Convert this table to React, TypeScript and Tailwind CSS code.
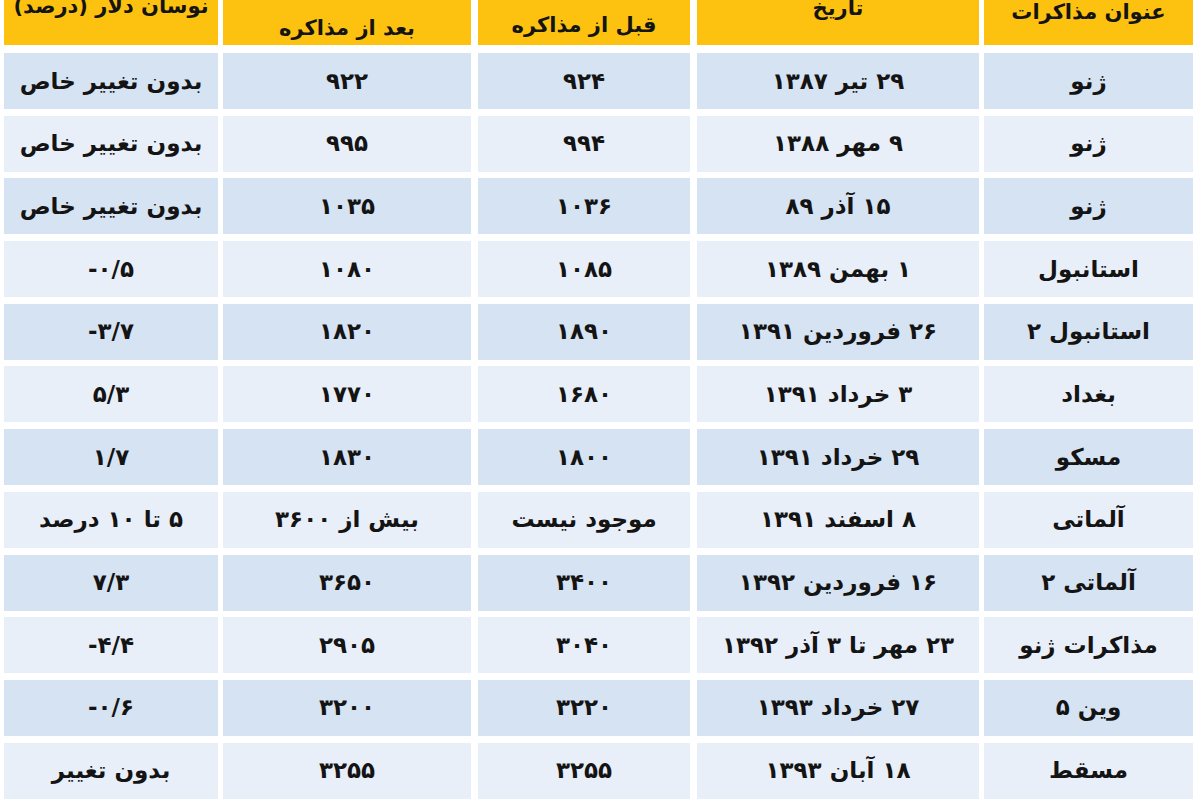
import React from "react";

const rows: string[][] = [
  ["ژنو", "۲۹ تیر ۱۳۸۷", "۹۲۴", "۹۲۲", "بدون تغییر خاص"],
  ["ژنو", "۹ مهر ۱۳۸۸", "۹۹۴", "۹۹۵", "بدون تغییر خاص"],
  ["ژنو", "۱۵ آذر ۸۹", "۱۰۳۶", "۱۰۳۵", "بدون تغییر خاص"],
  ["استانبول", "۱ بهمن ۱۳۸۹", "۱۰۸۵", "۱۰۸۰", "L-۰/۵"],
  ["استانبول ۲", "۲۶ فروردین ۱۳۹۱", "۱۸۹۰", "۱۸۲۰", "L-۳/۷"],
  ["بغداد", "۳ خرداد ۱۳۹۱", "۱۶۸۰", "۱۷۷۰", "۵/۳"],
  ["مسکو", "۲۹ خرداد ۱۳۹۱", "۱۸۰۰", "۱۸۳۰", "۱/۷"],
  ["آلماتی", "۸ اسفند ۱۳۹۱", "موجود نیست", "بیش از ۳۶۰۰", "۵ تا ۱۰ درصد"],
  ["آلماتی ۲", "۱۶ فروردین ۱۳۹۲", "۳۴۰۰", "۳۶۵۰", "۷/۳"],
  ["مذاکرات ژنو", "۲۳ مهر تا ۳ آذر ۱۳۹۲", "۳۰۴۰", "۲۹۰۵", "L-۴/۴"],
  ["وین ۵", "۲۷ خرداد ۱۳۹۳", "۳۲۲۰", "۳۲۰۰", "L-۰/۶"],
  ["مسقط", "۱۸ آبان ۱۳۹۳", "۳۲۵۵", "۳۲۵۵", "بدون تغییر"],
];

const widths = ["w-[209px]", "w-[282px]", "w-[212px]", "w-[248px]", "w-[214px]"];
const gaps = ["", "mr-[5px]", "mr-[7px]", "mr-[7px]", "mr-[5px]"];

const headers: { t: string; cls: string }[] = [
  { t: "عنوان مذاکرات", cls: "mt-[-20px]" },
  { t: "تاریخ", cls: "mt-[-28px]" },
  { t: "قبل از مذاکره", cls: "mt-[6px]" },
  { t: "بعد از مذاکره", cls: "mt-[12px]" },
  { t: "نوسان دلار (درصد)", cls: "mt-[-32px]" },
];

function Cell({ text }: { text: string }) {
  if (text.startsWith("L")) {
    return (
      <span dir="ltr" className="inline-block">
        {text.slice(1)}
      </span>
    );
  }
  return <span>{text}</span>;
}

export default function App() {
  return (
    <div
      dir="rtl"
      className="w-[1200px] h-[800px] overflow-hidden bg-white pr-[7px] pl-[4px] text-[#141414]"
      style={{ fontFamily: '"DejaVu Sans", sans-serif' }}
    >
      <div className="flex h-[45px]">
        {headers.map((h, i) => (
          <div
            key={i}
            className={`${widths[i]} ${gaps[i]} h-[45px] bg-[#fdc20f] flex justify-center items-center overflow-hidden`}
          >
            <span className={`${h.cls} text-[21px] font-bold leading-none whitespace-nowrap`}>{h.t}</span>
          </div>
        ))}
      </div>
      <div className="flex flex-col gap-y-[6.7px] mt-[8px]">
        {rows.map((r, ri) => (
          <div key={ri} className="flex h-[56px]">
            {r.map((c, ci) => (
              <div
                key={ci}
                className={`${widths[ci]} ${gaps[ci]} h-[56px] flex items-center justify-center ${
                  ri % 2 === 0 ? "bg-[#d6e3f3]" : "bg-[#e9eff9]"
                }`}
              >
                <span className="text-[23px] font-bold leading-none whitespace-nowrap">
                  <Cell text={c} />
                </span>
              </div>
            ))}
          </div>
        ))}
      </div>
    </div>
  );
}
